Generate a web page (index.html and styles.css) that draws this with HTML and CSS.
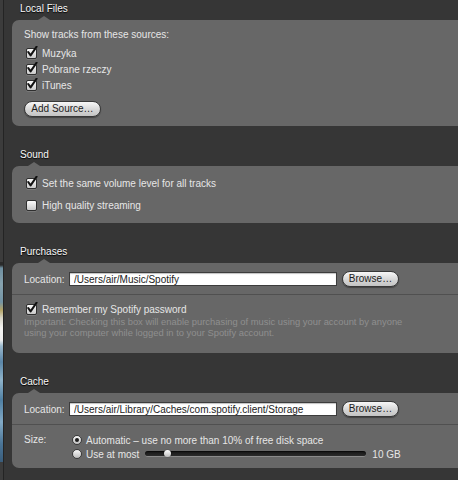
FILE: index.html
```html
<!DOCTYPE html>
<html>
<head>
<meta charset="utf-8">
<link rel="stylesheet" href="styles.css">
</head>
<body>
<div class="sidebar"><div class="art"></div></div>
<div class="main">

  <section class="section">
    <div class="section-title"><span>Local Files</span></div>
    <div class="panel">
      <div class="panel-body p-local">
        <div class="intro">Show tracks from these sources:</div>
        <div class="check-list">
          <div class="check-row"><span class="cb"><svg viewBox="0 0 12 12" width="12" height="12"><path d="M2.2 6 L4.6 9.4 L10.6 0.6" fill="none" stroke="#111" stroke-width="2" stroke-linecap="round" stroke-linejoin="round"/></svg></span>Muzyka</div>
          <div class="check-row"><span class="cb"><svg viewBox="0 0 12 12" width="12" height="12"><path d="M2.2 6 L4.6 9.4 L10.6 0.6" fill="none" stroke="#111" stroke-width="2" stroke-linecap="round" stroke-linejoin="round"/></svg></span>Pobrane rzeczy</div>
          <div class="check-row"><span class="cb"><svg viewBox="0 0 12 12" width="12" height="12"><path d="M2.2 6 L4.6 9.4 L10.6 0.6" fill="none" stroke="#111" stroke-width="2" stroke-linecap="round" stroke-linejoin="round"/></svg></span>iTunes</div>
        </div>
        <button class="btn btn-add">Add Source…</button>
      </div>
    </div>
  </section>

  <section class="section">
    <div class="section-title"><span>Sound</span></div>
    <div class="panel">
      <div class="panel-body p-sound">
        <div class="check-row"><span class="cb"><svg viewBox="0 0 12 12" width="12" height="12"><path d="M2.2 6 L4.6 9.4 L10.6 0.6" fill="none" stroke="#111" stroke-width="2" stroke-linecap="round" stroke-linejoin="round"/></svg></span>Set the same volume level for all tracks</div>
        <div class="check-row"><span class="cb"></span>High quality streaming</div>
      </div>
    </div>
  </section>

  <section class="section">
    <div class="section-title"><span>Purchases</span></div>
    <div class="panel">
      <div class="loc-row">
        <label class="loc-label">Location:</label>
        <input class="loc-input" type="text" value="/Users/air/Music/Spotify" readonly>
        <button class="btn btn-browse">Browse…</button>
      </div>
      <div class="split p-purch">
        <div class="check-row"><span class="cb"><svg viewBox="0 0 12 12" width="12" height="12"><path d="M2.2 6 L4.6 9.4 L10.6 0.6" fill="none" stroke="#111" stroke-width="2" stroke-linecap="round" stroke-linejoin="round"/></svg></span>Remember my Spotify password</div>
        <div class="note">Important: Checking this box will enable purchasing of music using your account by anyone using your computer while logged in to your Spotify account.</div>
      </div>
    </div>
  </section>

  <section class="section">
    <div class="section-title"><span>Cache</span></div>
    <div class="panel">
      <div class="loc-row">
        <label class="loc-label">Location:</label>
        <input class="loc-input" type="text" value="/Users/air/Library/Caches/com.spotify.client/Storage" readonly>
        <button class="btn btn-browse">Browse…</button>
      </div>
      <div class="split p-cache">
        <div class="size-label">Size:</div>
        <div class="size-options">
          <div class="radio-row"><span class="radio on"></span>Automatic – use no more than 10% of free disk space</div>
          <div class="radio-row"><span class="radio"></span>Use at most<span class="slider"><span class="knob"></span></span><span class="gb">10 GB</span></div>
        </div>
      </div>
    </div>
  </section>

</div>
</body>
</html>
```

FILE: styles.css
```css
html, body {
  margin: 0;
  height: 100%;
  overflow: hidden;
  background: #363636;
}

body {
  display: flex;
  font-family: "Liberation Sans", Arial, sans-serif;
  font-size: 10px;
  color: #e6e6e6;
}

.sidebar {
  width: 3px;
  flex: none;
  background: #3c3c3c;
  border-right: 1px solid #242424;
}

.sidebar .art {
  margin-top: 262px;
  height: 200px;
  background: linear-gradient(to bottom,
    #2a2a2a 0, #2a2a2a 3px, #6f8fa0 6px, #87a2ae 22px, #7394a5 40px,
    #b4a466 48px, #d8d6c8 56px, #f4f4f2 66px, #eeeeee 78px, #9ab8cc 84px,
    #5b86a8 100px, #8fb3ca 118px, #4f7fa2 138px, #82aac6 160px,
    #4a7496 182px, #3a5d7b 200px);
}

.main {
  flex: 1;
  min-width: 0;
  padding: 3px 0 0 8px;
}

.section + .section {
  margin-top: 23px;
}

.section-title {
  height: 12px;
  line-height: 12px;
  padding-left: 8px;
  margin-bottom: 5px;
  color: #f8f8f8;
  text-shadow: 0 1px 1px #000;
}

.section-title span {
  position: relative;
  display: inline-block;
}

.section-title span::after {
  content: "";
  position: absolute;
  left: 50%;
  margin-left: -6px;
  top: calc(100% + 1px);
  width: 0;
  height: 0;
  border-left: 6px solid transparent;
  border-right: 6px solid transparent;
  border-bottom: 4px solid #676767;
}

.panel {
  background: #676767;
  border-radius: 7px 0 0 7px;
}

.p-local {
  padding: 8px 12px 9px;
}

.intro {
  line-height: 13px;
}

.check-list {
  margin-top: 4px;
}

.check-row {
  display: flex;
  align-items: center;
  height: 16px;
  padding-left: 2px;
}

.cb {
  position: relative;
  flex: none;
  width: 9px;
  height: 9px;
  margin-right: 5px;
  border: 1px solid #2f2f2f;
  border-radius: 2px;
  background: linear-gradient(#fbfbfb, #c9c9c9);
  box-shadow: 0 1px 0 rgba(255,255,255,0.12);
}

.cb svg {
  position: absolute;
  left: -1px;
  top: -3px;
}

.btn {
  box-sizing: border-box;
  height: 16px;
  padding: 0;
  border: 1px solid #383838;
  border-radius: 8px;
  background: linear-gradient(#f7f7f7, #d6d6d6 55%, #c4c4c4);
  box-shadow: 0 1px 1px rgba(0,0,0,0.35);
  font-family: "Liberation Sans", Arial, sans-serif;
  font-size: 10px;
  line-height: 14px;
  color: #1c1c1c;
  text-align: center;
}

.btn-add {
  display: block;
  width: 77px;
  margin-top: 8px;
}

.btn-browse {
  width: 57px;
  flex: none;
}

.p-sound {
  display: flex;
  flex-direction: column;
  gap: 6px;
  padding: 9px 12px 10px;
}

.loc-row {
  display: flex;
  align-items: center;
  padding: 8px 12px 7px;
}

.loc-label {
  width: 45px;
  flex: none;
}

.loc-input {
  box-sizing: border-box;
  width: 268px;
  height: 14px;
  margin: 0 5px 0 0;
  padding: 0 0 0 4px;
  border: 1px solid #3c3c3c;
  background: #fff;
  box-shadow: inset 0 1px 1px rgba(0,0,0,0.25);
  font-family: "Liberation Sans", Arial, sans-serif;
  font-size: 10px;
  color: #222;
  outline: none;
}

.split {
  border-top: 1px solid #505050;
}

.p-purch {
  padding: 6px 12px 15px;
}

.note {
  width: 388px;
  font-size: 9.4px;
  line-height: 10.5px;
  color: #8f8f8f;
}

.p-cache {
  display: flex;
  padding: 8px 12px 7px;
}

.size-label {
  width: 48px;
  flex: none;
  line-height: 14px;
}

.size-options {
  display: flex;
  flex-direction: column;
}

.radio-row {
  display: flex;
  align-items: center;
  height: 14px;
}

.radio {
  box-sizing: border-box;
  flex: none;
  width: 10px;
  height: 10px;
  margin-right: 4px;
  border: 1px solid #3a3a3a;
  border-radius: 50%;
  background: linear-gradient(#f8f8f8, #bdbdbd);
  display: flex;
  align-items: center;
  justify-content: center;
}

.radio.on::after {
  content: "";
  width: 4px;
  height: 4px;
  border-radius: 50%;
  background: #1c1c1c;
}

.slider {
  position: relative;
  box-sizing: border-box;
  width: 221px;
  height: 6px;
  margin-left: 6px;
  border-radius: 3px;
  background: linear-gradient(#151515, #2a2a2a);
  border-bottom: 1px solid #8a8a8a;
  box-shadow: inset 0 1px 1px rgba(0,0,0,0.6);
}

.knob {
  position: absolute;
  left: 19px;
  top: -1px;
  width: 7px;
  height: 7px;
  border-radius: 50%;
  background: linear-gradient(#ffffff, #bcbcbc);
  box-shadow: 0 0 1px rgba(0,0,0,0.8);
}

.gb {
  margin-left: 6px;
}
```
